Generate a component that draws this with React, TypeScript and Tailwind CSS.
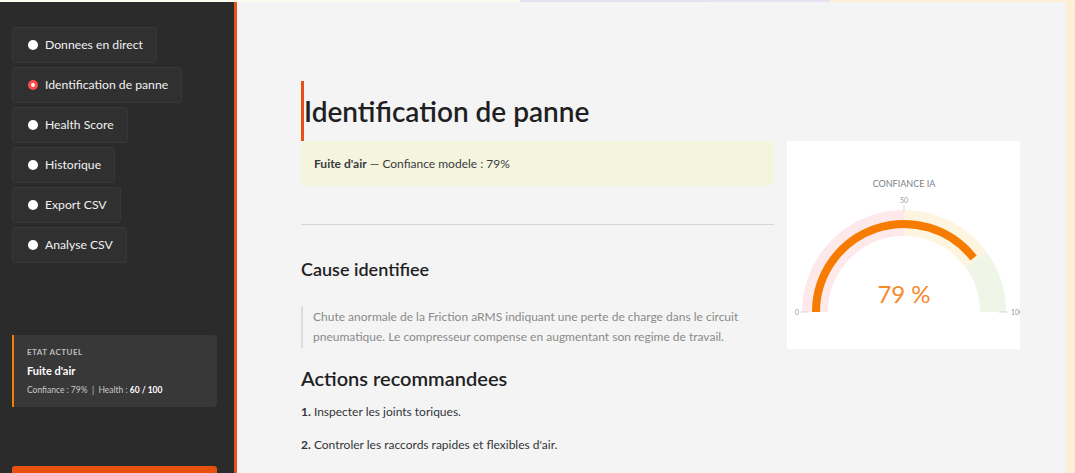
const nav = [
  "Donnees en direct",
  "Identification de panne",
  "Health Score",
  "Historique",
  "Export CSV",
  "Analyse CSV",
];

function pt(cx: number, cy: number, r: number, v: number) {
  const a = Math.PI * (1 - v / 100);
  return [cx + r * Math.cos(a), cy - r * Math.sin(a)];
}

function arc(cx: number, cy: number, r: number, from: number, to: number) {
  const [x1, y1] = pt(cx, cy, r, from);
  const [x2, y2] = pt(cx, cy, r, to);
  return `M ${x1} ${y1} A ${r} ${r} 0 0 1 ${x2} ${y2}`;
}

function Gauge() {
  const cx = 117;
  const cy = 171;
  return (
    <div className="w-[233px] h-[208px] bg-white overflow-hidden shrink-0">
      <svg width="233" height="208" viewBox="0 0 233 208">
        <text x={cx} y={46} textAnchor="middle" fontSize="9" fill="#7a7f87" style={{ fontFamily: "Lato, sans-serif" }}>
          CONFIANCE IA
        </text>
        <path d={arc(cx, cy, 89, 0, 50)} stroke="#fde8ea" strokeWidth="26" fill="none" />
        <path d={arc(cx, cy, 89, 50, 80)} stroke="#fdf5df" strokeWidth="26" fill="none" />
        <path d={arc(cx, cy, 89, 80, 100)} stroke="#eff6e7" strokeWidth="26" fill="none" />
        <path d={arc(cx, cy, 88, 0, 79)} stroke="#f57c00" strokeWidth="8" fill="none" />
        <line x1={cx} y1={64} x2={cx} y2={70} stroke="#d8d8d8" strokeWidth="1" />
        <text x={cx} y={62} textAnchor="middle" fontSize="7" fill="#9a9a9a" style={{ fontFamily: "Lato, sans-serif" }}>
          50
        </text>
        <line x1={13} y1={171} x2={22} y2={171} stroke="#d8d8d8" strokeWidth="1" />
        <text x={8} y={174} fontSize="7" fill="#9a9a9a" style={{ fontFamily: "Lato, sans-serif" }}>
          0
        </text>
        <line x1={212} y1={171} x2={221} y2={171} stroke="#d8d8d8" strokeWidth="1" />
        <text x={224} y={174} fontSize="7" fill="#9a9a9a" style={{ fontFamily: "Lato, sans-serif" }}>
          100
        </text>
        <text x={cx} y={162} textAnchor="middle" fontSize="24" fill="#f58a2a" style={{ fontFamily: "Lato, sans-serif", fontWeight: 400 }}>
          79 %
        </text>
      </svg>
    </div>
  );
}

export default function App() {
  return (
    <div className="h-[473px] w-full flex flex-col bg-[#fdfbf0] overflow-hidden font-['Lato',sans-serif]">
      <div className="h-[2px] shrink-0 flex">
        <div className="w-[520px]" />
        <div className="w-[190px] bg-[#e6e0f0]" />
        <div className="w-[120px] bg-[#e8e2f0]" />
        <div className="flex-1 bg-[#fdf0d6]" />
      </div>
      <div className="flex flex-1 min-h-0">
        <aside className="w-[237px] shrink-0 bg-[#2b2b2b] border-r-[3px] border-[#e8531b] flex flex-col pl-3 pr-[17px] pt-[25px]">
          <nav className="flex flex-col gap-1">
            {nav.map((item, i) => (
              <div
                key={item}
                className="w-fit h-9 flex items-center gap-[7px] pl-[15px] pr-[13px] rounded-[3px] bg-[#303030] border border-[#383838] text-[12.2px] text-[#f2f2f2]"
              >
                {i === 1 ? (
                  <span className="w-[10px] h-[10px] rounded-full bg-[#ff4b4b] flex items-center justify-center">
                    <span className="w-[4px] h-[4px] rounded-full bg-white" />
                  </span>
                ) : (
                  <span className="w-[10px] h-[10px] rounded-full bg-white" />
                )}
                {item}
              </div>
            ))}
          </nav>
          <div className="mt-[72px] h-[72px] bg-[#383838] border-l-2 border-[#f08000] rounded-r-[3px] pl-[13px] pt-[11px]">
            <div className="text-[8px] font-bold tracking-[0.5px] text-[#bdbdbd] leading-[12px]">ETAT ACTUEL</div>
            <div className="text-[11px] font-bold text-white mt-[6px] leading-[14px]">Fuite d'air</div>
            <div className="text-[8.5px] text-[#c8c8c8] mt-[6px] leading-[12px]">
              Confiance : 79% &nbsp;| &nbsp;Health : <span className="font-bold text-white">60 / 100</span>
            </div>
          </div>
          <div className="mt-auto h-[7px] bg-[#e8500f] rounded-t-[3px]" />
        </aside>
        <main className="flex-1 bg-[#f4f4f4] pl-[64px] pt-[79px] text-[#262730]">
          <h1 className="border-l-[3px] border-[#e8501a] h-[60px] flex items-center text-[28px] font-semibold leading-none text-[#1f1f24] w-[473px]">
            Identification de panne
          </h1>
          <div className="flex gap-[13px]">
            <div className="w-[473px] flex flex-col">
              <div className="h-[45px] rounded-md bg-[#f5f5de] flex items-center px-[13px] text-[12px] text-[#3a3b42]">
                <span className="font-bold">Fuite d'air</span>&nbsp;— Confiance modele : 79%
              </div>
              <div className="mt-[38px] h-px bg-[#d6d6d6]" />
              <h2 className="mt-[32px] text-[18px] font-semibold leading-[24px] text-[#1f1f24]">Cause identifiee</h2>
              <blockquote className="mt-[25px] border-l-2 border-[#dddddd] pl-[10px] py-px text-[12px] leading-[20px] text-[#8a8a8a]">
                Chute anormale de la Friction aRMS indiquant une perte de charge dans le circuit pneumatique. Le compresseur compense en augmentant son regime de travail.
              </blockquote>
              <h2 className="mt-[17px] text-[20px] font-semibold leading-[26px] text-[#1f1f24]">Actions recommandees</h2>
              <p className="mt-[12px] text-[12px] leading-[18px] text-[#33343a]">
                <span className="font-bold">1.</span> Inspecter les joints toriques.
              </p>
              <p className="mt-[15px] text-[12px] leading-[18px] text-[#33343a]">
                <span className="font-bold">2.</span> Controler les raccords rapides et flexibles d'air.
              </p>
            </div>
            <Gauge />
          </div>
        </main>
        <div className="w-[9px] shrink-0 bg-[#fdefd6]" />
      </div>
    </div>
  );
}
